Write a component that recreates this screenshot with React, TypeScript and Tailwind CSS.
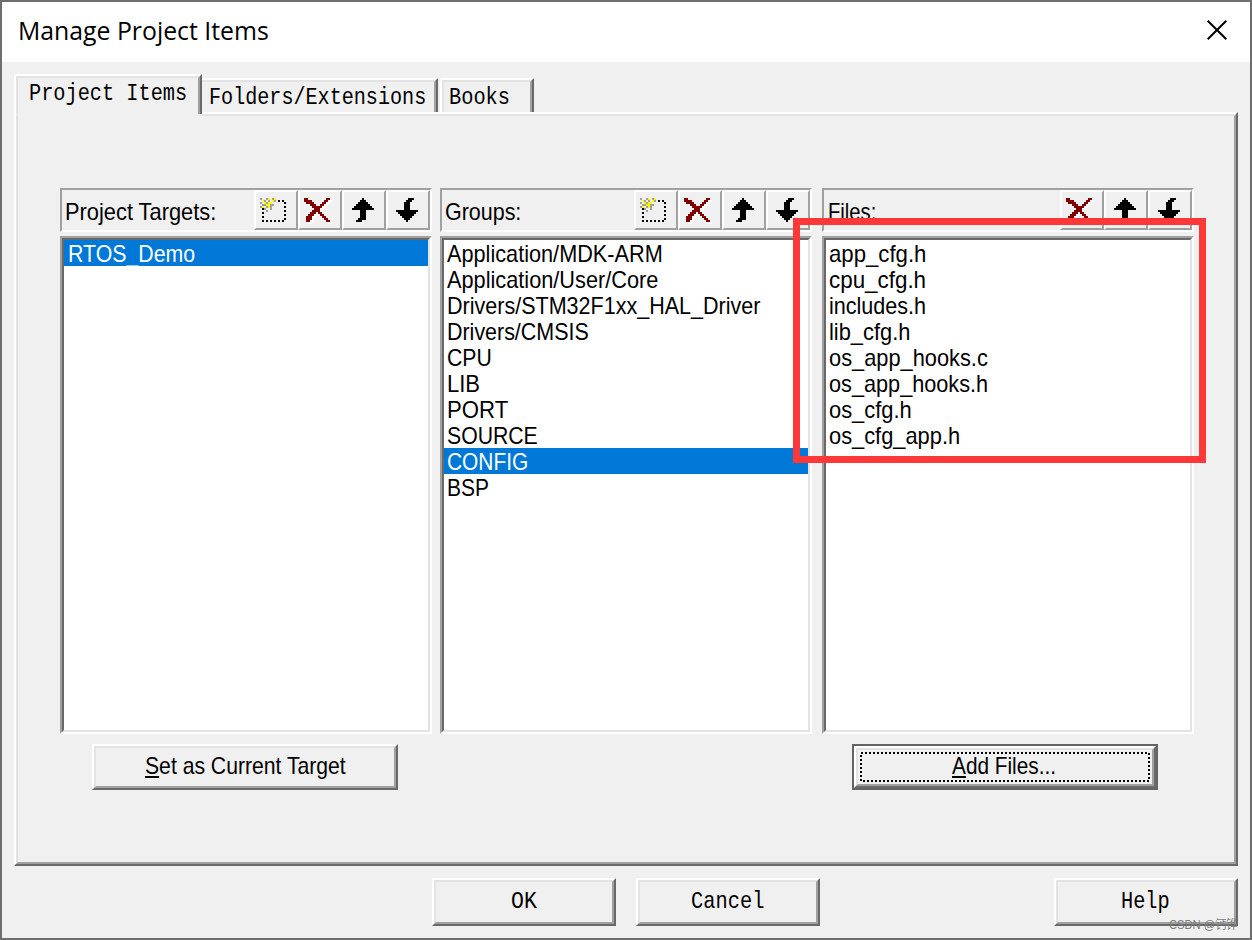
import { useLayoutEffect, useRef, useState, type ReactNode } from "react";

const SANS = "font-['Liberation_Sans',Arial,sans-serif] text-[24px] leading-[26px]";
const MONO = "font-['Liberation_Mono','Courier_New',monospace] text-[24px] leading-[26px]";

/** A line of text condensed to an exact advance width. */
function Fit({ width, children, className = "" }: { width: number; children: ReactNode; className?: string }) {
  const ref = useRef<HTMLSpanElement>(null);
  const [scale, setScale] = useState(1);
  useLayoutEffect(() => {
    if (ref.current) setScale(width / ref.current.offsetWidth);
  }, [width]);
  return (
    <span className={`block shrink-0 whitespace-nowrap ${className}`} style={{ width }}>
      <span ref={ref} className="inline-block origin-left align-top" style={{ transform: `scaleX(${scale})` }}>
        {children}
      </span>
    </span>
  );
}

type Run = [x: number, y: number, w: number];

function Pixels({ runs, className }: { runs: Run[]; className: string }) {
  return <path className={className} d={runs.map(([x, y, w]) => `M${x} ${y}h${w}v1h-${w}z`).join("")} />;
}

const CROSS: Run[] = [
  [3, 4, 2], [14, 4, 2], [3, 5, 4], [13, 5, 2], [4, 6, 4], [12, 6, 2], [6, 7, 3], [11, 7, 2],
  [7, 8, 5], [8, 9, 3], [7, 10, 4], [6, 11, 3], [10, 11, 2], [5, 12, 3], [11, 12, 2],
  [4, 13, 3], [12, 13, 2], [4, 14, 3], [13, 14, 2], [4, 15, 2], [14, 15, 2],
];
const CROSS_LIGHT: Run[] = CROSS.map(([x, y, w]) => [x + 1, y + 1, w]);
const UP: Run[] = [
  [10, 4, 1], [9, 5, 3], [8, 6, 5], [7, 7, 7], [6, 8, 9], [5, 9, 11],
  [9, 10, 3], [9, 11, 3], [9, 12, 3], [9, 13, 3], [8, 14, 4], [7, 15, 3],
];
const DOWN: Run[] = [
  [11, 4, 3], [10, 5, 3], [9, 6, 3], [9, 7, 3], [9, 8, 3], [9, 9, 3],
  [5, 10, 11], [6, 11, 9], [7, 12, 7], [8, 13, 5], [9, 14, 3], [10, 15, 1],
];
const DOTS: Run[] = [
  [10, 5, 1], [12, 5, 1], [14, 5, 1], [15, 6, 1], [15, 8, 1], [15, 10, 1], [15, 12, 1], [15, 14, 1],
  [4, 9, 1], [4, 11, 1], [4, 13, 1], [4, 15, 1], [6, 15, 1], [8, 15, 1], [10, 15, 1], [12, 15, 1], [14, 15, 1],
];
const STAR_YELLOW: Run[] = [
  [7, 4, 1], [10, 4, 1], [4, 5, 1], [9, 5, 1], [5, 6, 1], [7, 6, 2], [6, 7, 2], [4, 8, 1], [7, 8, 1],
];
const STAR_GRAY: Run[] = [
  [3, 4, 1], [6, 4, 1], [9, 4, 1], [5, 5, 1], [7, 5, 1], [10, 5, 1], [3, 6, 1], [6, 6, 1], [4, 7, 2],
  [8, 7, 2], [3, 8, 1], [6, 8, 1], [8, 8, 1], [5, 9, 1], [8, 9, 1], [6, 10, 1],
];

type Tool = "new" | "delete" | "up" | "down";

function ToolButton({ kind }: { kind: Tool }) {
  return (
    <button
      aria-label={kind}
      className="h-10 w-11 border-2 border-t-white border-l-white border-r-[#a0a0a0] border-b-[#a0a0a0] bg-[#f0f0f0]"
    >
      <svg viewBox="1 1 20 18" className="block h-9 w-10" shapeRendering="crispEdges">
        {kind === "new" && (
          <>
            <Pixels runs={DOTS} className="fill-black" />
            <Pixels runs={STAR_GRAY} className="fill-[#a0a0a0]" />
            <Pixels runs={STAR_YELLOW} className="fill-[#ffff00]" />
          </>
        )}
        {kind === "delete" && (
          <>
            <Pixels runs={CROSS_LIGHT} className="fill-white" />
            <Pixels runs={CROSS} className="fill-[#800000]" />
          </>
        )}
        {kind === "up" && <Pixels runs={UP} className="fill-black" />}
        {kind === "down" && <Pixels runs={DOWN} className="fill-black" />}
      </svg>
    </button>
  );
}

type Item = [label: string, width: number];

function ListColumn({ title, titleWidth, titlePad, itemPad, tools, items, selected }: {
  title: string;
  titleWidth: number;
  titlePad: string;
  itemPad: string;
  tools: Tool[];
  items: Item[];
  selected?: string;
}) {
  return (
    <section className="flex w-[372px] flex-col">
      <header className="flex h-11 justify-between border-2 border-t-[#a0a0a0] border-l-[#a0a0a0] border-r-white border-b-white">
        <div className={`${SANS} ${titlePad} pt-[9px] text-black`}>
          <Fit width={titleWidth}>{title}</Fit>
        </div>
        <div className="flex">
          {tools.map((t) => (
            <ToolButton key={t} kind={t} />
          ))}
        </div>
      </header>
      <div className="mt-1 h-[498px] border-2 border-t-[#a0a0a0] border-l-[#a0a0a0] border-r-white border-b-white">
        <ul className="h-full border-2 border-t-[#696969] border-l-[#696969] border-r-[#e3e3e3] border-b-[#e3e3e3] bg-white">
          {items.map(([label, width]) => (
            <li
              key={label}
              className={`h-[26px] pt-px ${SANS} ${itemPad} ${label === selected ? "bg-[#0078d7] text-white" : "text-black"}`}
            >
              <Fit width={width}>{label}</Fit>
            </li>
          ))}
        </ul>
      </div>
    </section>
  );
}

function PushButton({ children, className }: { children: ReactNode; className: string }) {
  return (
    <button className={`flex border-2 border-t-white border-l-white border-r-[#696969] border-b-[#696969] ${className}`}>
      <span className="flex h-full w-full items-start justify-center border-2 border-t-[#e3e3e3] border-l-[#e3e3e3] border-r-[#a0a0a0] border-b-[#a0a0a0]">
        {children}
      </span>
    </button>
  );
}

function Mnemonic({ letter }: { letter: string }) {
  return <span className="inline-block h-[25px] border-b-2 border-black align-top">{letter}</span>;
}

const GROUPS: Item[] = [
  ["Application/MDK-ARM", 216], ["Application/User/Core", 211], ["Drivers/STM32F1xx_HAL_Driver", 313],
  ["Drivers/CMSIS", 142], ["CPU", 45], ["LIB", 33], ["PORT", 61], ["SOURCE", 91], ["CONFIG", 81], ["BSP", 42],
];
const FILES: Item[] = [
  ["app_cfg.h", 97], ["cpu_cfg.h", 97], ["includes.h", 97], ["lib_cfg.h", 81],
  ["os_app_hooks.c", 159], ["os_app_hooks.h", 159], ["os_cfg.h", 83], ["os_cfg_app.h", 131],
];

function Tabs() {
  return (
    <nav className="flex h-10 items-start">
      <div className="z-10 flex h-10 w-[188px] rounded-tl-[3px] border-t-2 border-l-2 border-r-2 border-t-white border-l-white border-r-[#696969] bg-[#f0f0f0]">
        <div className={`h-full w-full border-t-2 border-l-2 border-r-2 border-t-[#e3e3e3] border-l-[#e3e3e3] border-r-[#a0a0a0] pt-[3px] pl-[11px] ${MONO}`}>
          <Fit width={158}>Project Items</Fit>
        </div>
      </div>
      <div className="mt-1 flex h-[34px] w-[236px] border-t-2 border-r-2 border-t-white border-r-[#696969]">
        <div className={`h-full w-full border-t-2 border-r-2 border-t-[#e3e3e3] border-r-[#a0a0a0] pt-[3px] pl-[7px] ${MONO}`}>
          <Fit width={217}>Folders/Extensions</Fit>
        </div>
      </div>
      <div className="mt-1 ml-[2px] flex h-[34px] w-[94px] rounded-tl-[3px] border-t-2 border-r-2 border-l-2 border-t-white border-l-white border-r-[#696969]">
        <div className={`h-full w-full border-t-2 border-r-2 border-l-2 border-t-[#e3e3e3] border-l-[#e3e3e3] border-r-[#a0a0a0] pt-[3px] pl-[5px] ${MONO}`}>
          <Fit width={61}>Books</Fit>
        </div>
      </div>
    </nav>
  );
}

export default function App() {
  return (
    <div className="relative flex h-[940px] w-[1252px] flex-col overflow-hidden border-2 border-[#6e6e6e] bg-[#f0f0f0] text-black">
      <header className="flex h-[60px] shrink-0 items-start justify-between bg-white pl-[16px]">
        <h1 className="pt-[10px] font-['Open_Sans','Noto_Sans',sans-serif] text-[25px] leading-[36px]">
          <Fit width={251}>Manage Project Items</Fit>
        </h1>
        <button aria-label="Close" className="mt-[17px] mr-[22px]">
          <svg viewBox="0 0 22 22" className="block size-[22px]">
            <path d="M1.7 1.7 20.3 20.3M20.3 1.7 1.7 20.3" stroke="black" strokeWidth="2" fill="none" />
          </svg>
        </button>
      </header>

      <div className="flex flex-col px-3 pt-3">
        <Tabs />
        <div className="-mt-[2px] flex">
          <div className="h-[2px] w-[188px] shrink-0" />
          <div className="h-[2px] grow bg-white" />
        </div>
        <main className="-mt-[2px] h-[754px] w-[1224px] border-2 border-t-transparent border-l-white border-r-[#696969] border-b-[#696969]">
          <div className="flex h-full flex-col border-2 border-t-transparent border-l-[#e3e3e3] border-r-[#a0a0a0] border-b-[#a0a0a0]">
            <div className="-mt-[2px] ml-[184px] h-[2px] shrink-0 bg-[#e3e3e3]" />
            <div className="mt-[72px] ml-[42px] flex">
              <ListColumn
                title="Project Targets:" titleWidth={151} titlePad="pl-[3px]" itemPad="pl-[4px]"
                tools={["new", "delete", "up", "down"]}
                items={[["RTOS_Demo", 127]]} selected="RTOS_Demo"
              />
              <div className="w-2" />
              <ListColumn
                title="Groups:" titleWidth={76} titlePad="pl-[3px]" itemPad="pl-[3px]"
                tools={["new", "delete", "up", "down"]} items={GROUPS} selected="CONFIG"
              />
              <div className="w-[10px]" />
              <ListColumn
                title="Files:" titleWidth={48} titlePad="pl-[4px]" itemPad="pl-[3px]"
                tools={["delete", "up", "down"]} items={FILES}
              />
            </div>
            <div className="mt-[10px] flex justify-between pr-[76px] pl-[74px]">
              <PushButton className={`h-[46px] w-[306px] ${SANS}`}>
                <Fit width={201} className="mt-[5px]">
                  <Mnemonic letter="S" />et as Current Target
                </Fit>
              </PushButton>
              <div className="relative h-[46px] w-[306px] border-2 border-[#646464]">
                <PushButton className={`h-[42px] w-[302px] ${SANS}`}>
                  <Fit width={104} className="mt-[3px] mr-[3px]">
                    <Mnemonic letter="A" />dd Files...
                  </Fit>
                </PushButton>
                <svg className="absolute top-[6px] left-[6px] h-[30px] w-[290px]" shapeRendering="crispEdges">
                  <rect x="1" y="1" width="288" height="28" fill="none" stroke="black" strokeWidth="2" strokeDasharray="2 2" />
                </svg>
              </div>
            </div>
          </div>
        </main>
      </div>

      <footer className="mt-3 flex pr-3 pl-[430px]">
        <PushButton className={`h-12 w-[184px] ${MONO}`}>
          <Fit width={26} className="mt-[7px]">OK</Fit>
        </PushButton>
        <PushButton className={`ml-5 h-12 w-[184px] ${MONO}`}>
          <Fit width={73} className="mt-[7px] mr-[2px]">Cancel</Fit>
        </PushButton>
        <PushButton className={`ml-auto h-12 w-[184px] ${MONO}`}>
          <Fit width={49} className="mt-[7px] mr-[2px]">Help</Fit>
        </PushButton>
      </footer>

      <div className="pointer-events-none absolute top-[216px] left-[791px] h-[245px] w-[413px] border-[7px] border-[#fd3838]" />
      <span className="absolute top-[914px] left-[1167px] text-[12px] leading-[18px] text-[#7c7c7c] font-['Liberation_Sans','Noto_Sans_CJK_SC',sans-serif]">
        <Fit width={69}>CSDN @钙铧</Fit>
      </span>
      <svg className="absolute -top-[2px] -left-[2px] h-[940px] w-[1252px]" shapeRendering="crispEdges">
        <path
          className="fill-[#111]"
          d="M0 338h2v2h-2zM0 354h2v2h-2zM0 572h2v2h-2zM0 588h2v2h-2zM0 676h2v2h-2zM0 692h2v2h-2zM0 852h2v2h-2zM0 884h2v2h-2zM0 900h2v2h-2z
             M2 938h2v2h-2zM10 938h2v2h-2zM34 938h2v2h-2zM44 938h2v2h-2zM52 938h2v2h-2zM58 938h2v2h-2zM64 938h2v2h-2zM72 938h2v2h-2zM80 938h2v2h-2zM122 938h2v2h-2zM132 938h2v2h-2z
             M328 938h2v2h-2zM338 938h2v2h-2zM342 938h2v2h-2zM346 938h2v2h-2zM352 938h2v2h-2zM360 938h2v2h-2zM370 938h2v2h-2zM380 938h2v2h-2zM386 938h2v2h-2zM398 938h2v2h-2z"
        />
      </svg>
    </div>
  );
}
